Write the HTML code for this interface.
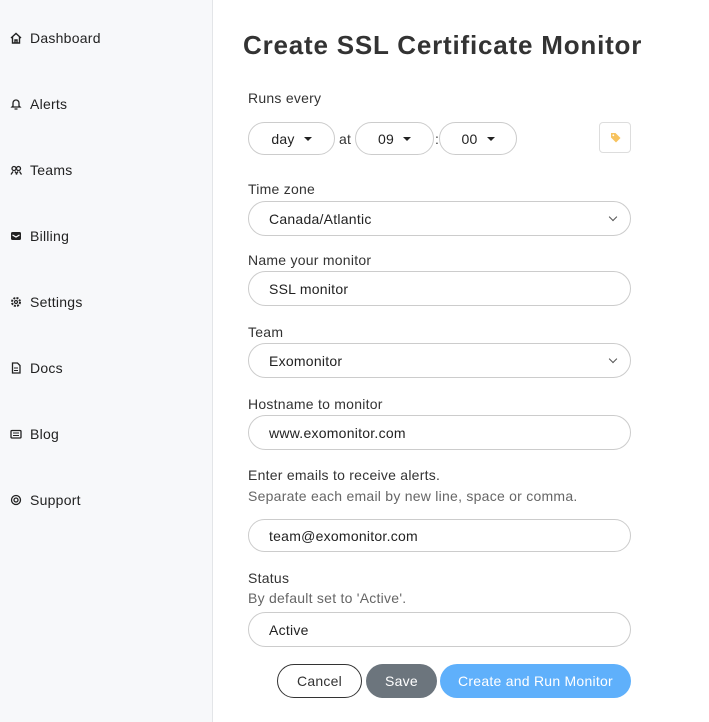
<!DOCTYPE html>
<html><head><meta charset="utf-8"><style>
*{box-sizing:border-box;margin:0;padding:0}
body{width:709px;height:722px;overflow:hidden;background:#fff;font-family:"Liberation Sans",sans-serif;color:#333;position:relative;letter-spacing:0.25px}
.side{position:absolute;left:0;top:0;width:213px;height:722px;background:#f7f8fa;border-right:1px solid #e3e5e8}
.nav{position:absolute;left:10px;font-size:14px;color:#222;display:flex;align-items:center;gap:8px;height:20px}
.nav svg{width:12px;height:12px}
h1{position:absolute;left:243px;top:30px;font-size:26px;font-weight:bold;color:#333;letter-spacing:0.8px}
.lbl{position:absolute;left:248px;font-size:14px;color:#333}
.sub{color:#666}
.inp{position:absolute;left:248px;width:383px;height:35px;border:1px solid #ccc;border-radius:18px;font-size:14px;padding-left:20px;display:flex;align-items:center;color:#222}
.pill{position:absolute;top:122px;height:33px;border:1px solid #ccc;border-radius:17px;font-size:14px;display:flex;align-items:center;justify-content:center;color:#222}
.caret{display:inline-block;width:0;height:0;border-left:4px solid transparent;border-right:4px solid transparent;border-top:4px solid #222;margin-left:9px}
.chev{position:absolute;right:14px;top:12px;width:6px;height:6px;border-right:1px solid #555;border-bottom:1px solid #555;transform:rotate(45deg)}
.btn{position:absolute;top:664px;height:34px;border-radius:17px;font-size:14px;display:flex;align-items:center;justify-content:center}
</style></head><body>
<div class="side">
<div class="nav" style="top:28px"><svg viewBox="0 0 12 12"><path d="M1 6L6 1.5 11 6M2.5 5v6h7V5M5 11V8h2v3" fill="none" stroke="#222" stroke-width="1.4"/></svg>Dashboard</div>
<div class="nav" style="top:94px"><svg viewBox="0 0 12 12"><path d="M3 8V5a3 3 0 016 0v3l1 1H2zM4.5 11h3" fill="none" stroke="#222" stroke-width="1.3"/></svg>Alerts</div>
<div class="nav" style="top:160px"><svg viewBox="0 0 12 12"><circle cx="4" cy="4.5" r="2" fill="none" stroke="#222" stroke-width="1.3"/><circle cx="8.5" cy="4.5" r="2" fill="none" stroke="#222" stroke-width="1.3"/><path d="M1 10.5l2-3M7 10.5l-2-3M6 10.5l2-3M11.5 10.5l-2-3" stroke="#222" stroke-width="1.3"/></svg>Teams</div>
<div class="nav" style="top:226px"><svg viewBox="0 0 12 12"><rect x="1" y="2" width="10" height="8" rx="1.5" fill="#222"/><path d="M2.5 5l3.5 2 3.5-2" fill="none" stroke="#fff" stroke-width="1.2"/></svg>Billing</div>
<div class="nav" style="top:292px"><svg viewBox="0 0 12 12"><circle cx="6" cy="6" r="4" fill="none" stroke="#222" stroke-width="2" stroke-dasharray="2 1.2"/><circle cx="6" cy="6" r="1.5" fill="none" stroke="#222" stroke-width="1.2"/></svg>Settings</div>
<div class="nav" style="top:358px"><svg viewBox="0 0 12 12"><path d="M2.5 1h5l2.5 2.5V11h-7.5z" fill="none" stroke="#222" stroke-width="1.3"/><path d="M4 6h4M4 8.5h4" stroke="#222" stroke-width="1.1"/></svg>Docs</div>
<div class="nav" style="top:424px"><svg viewBox="0 0 12 12"><rect x="1" y="2.5" width="10" height="7.5" rx="1" fill="none" stroke="#222" stroke-width="1.3"/><path d="M3 5h6M3 7.5h6" stroke="#222" stroke-width="1.1"/></svg>Blog</div>
<div class="nav" style="top:490px"><svg viewBox="0 0 12 12"><circle cx="6" cy="6" r="4.5" fill="none" stroke="#222" stroke-width="1.3"/><circle cx="6" cy="6" r="2" fill="none" stroke="#222" stroke-width="1.3"/></svg>Support</div>
</div>
<h1>Create SSL Certificate Monitor</h1>
<div class="lbl" style="top:90px">Runs every</div>
<div class="pill" style="left:248px;width:87px">day<span class="caret"></span></div>
<div class="lbl" style="left:339px;top:131px">at</div>
<div class="pill" style="left:355px;width:79px">09<span class="caret"></span></div>
<div class="lbl" style="left:435px;top:131px">:</div>
<div class="pill" style="left:439px;width:78px">00<span class="caret"></span></div>
<div style="position:absolute;left:599px;top:122px;width:32px;height:31px;border:1px solid #ddd;border-radius:4px"><svg style="position:absolute;left:10px;top:9px" width="11" height="11" viewBox="0 0 11 11"><path d="M1 1h4.5l5 5-4.5 4.5-5-5z" fill="#f7c35f"/><circle cx="3.3" cy="3.3" r="0.9" fill="#fff"/></svg></div>
<div class="lbl" style="top:181px">Time zone</div>
<div class="inp" style="top:201px">Canada/Atlantic<span class="chev"></span></div>
<div class="lbl" style="top:252px">Name your monitor</div>
<div class="inp" style="top:271px">SSL monitor</div>
<div class="lbl" style="top:324px">Team</div>
<div class="inp" style="top:343px">Exomonitor<span class="chev"></span></div>
<div class="lbl" style="top:396px">Hostname to monitor</div>
<div class="inp" style="top:415px">www.exomonitor.com</div>
<div class="lbl" style="top:467px">Enter emails to receive alerts.</div>
<div class="lbl sub" style="top:488px">Separate each email by new line, space or comma.</div>
<div class="inp" style="top:519px;height:33px">team@exomonitor.com</div>
<div class="lbl" style="top:570px">Status</div>
<div class="lbl sub" style="top:590px">By default set to 'Active'.</div>
<div class="inp" style="top:612px">Active</div>
<div class="btn" style="left:277px;width:85px;border:1px solid #333;color:#333">Cancel</div>
<div class="btn" style="left:366px;width:71px;background:#6c757d;color:#fff">Save</div>
<div class="btn" style="left:440px;width:191px;background:#5fb0fb;color:#fff">Create and Run Monitor</div>
</body></html>
